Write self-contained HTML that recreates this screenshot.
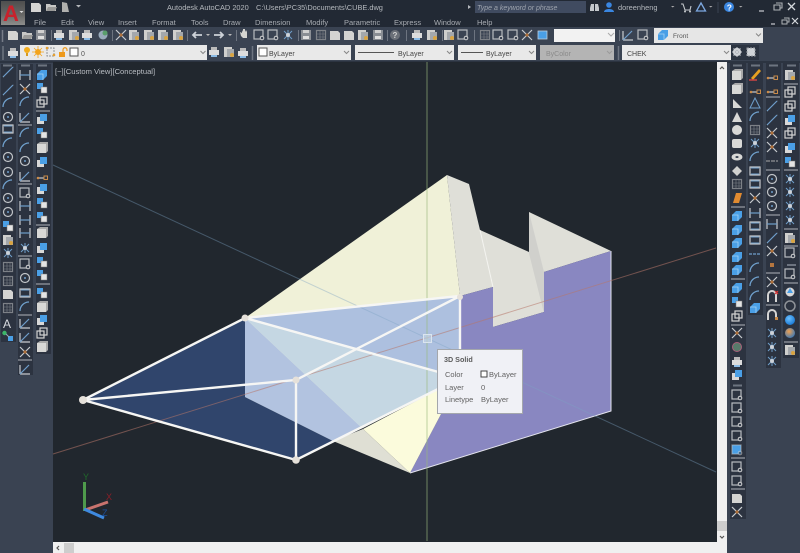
<!DOCTYPE html>
<html><head><meta charset="utf-8"><style>
html,body{margin:0;padding:0;width:800px;height:553px;overflow:hidden;background:#3a4352;font-family:"Liberation Sans",sans-serif}
svg{position:absolute;left:0;top:0;display:block}
text{font-family:"Liberation Sans",sans-serif}
</style></head><body>
<svg width="800" height="553" viewBox="0 0 800 553" xmlns="http://www.w3.org/2000/svg">
<defs>
<linearGradient id="lg" x1="0" y1="0" x2="0" y2="1"><stop offset="0" stop-color="#4e4e4e"/><stop offset=".6" stop-color="#6a6a68"/><stop offset="1" stop-color="#8e8e8c"/></linearGradient>
<radialGradient id="sb" cx=".4" cy=".35" r=".7"><stop offset="0" stop-color="#6cc0ff"/><stop offset="1" stop-color="#1676d2"/></radialGradient>
<radialGradient id="so" cx=".4" cy=".35" r=".7"><stop offset="0" stop-color="#f0a050"/><stop offset="1" stop-color="#3a78b8"/></radialGradient>
<g id="l"><path d="M-5 5L5-5" stroke="#6f9fcb" stroke-width="1.2"/><path d="M-5 5h.1M5-5h.1" stroke="#c8ccd0" stroke-width="2"/></g>
<g id="a"><path d="M-5 4A9 9 0 0 1 4-5" fill="none" stroke="#6f9fcb" stroke-width="1.3"/></g>
<g id="c"><circle r="4.5" fill="none" stroke="#c0c4c8" stroke-width="1.2"/><circle r="1" fill="#6f9fcb"/></g>
<g id="r"><rect x="-5" y="-4" width="10" height="8" fill="none" stroke="#c8ccd0" stroke-width="1.2"/><path d="M-4-3h8M-4 3h8" stroke="#6f9fcb"/></g>
<g id="b"><path d="M-5 5V-1L-1-5H5V1L1 5Z" fill="#4a9fe6"/><path d="M-5-1H1V5" fill="none" stroke="#a6d2f4" stroke-width=".8"/></g>
<g id="g"><rect x="-5" y="-4" width="9" height="9" fill="#d8d8d6"/><path d="M-5-4L-2-6H6V3L4 5V-4Z" fill="#a9a9a9"/></g>
<g id="w"><rect x="-5" y="-2" width="7" height="7" fill="none" stroke="#d4d4d4" stroke-width="1.2"/><rect x="-2" y="-5" width="7" height="7" fill="none" stroke="#d4d4d4" stroke-width="1.2"/></g>
<g id="u"><rect x="-5" y="-2" width="7" height="7" fill="#d8d8d8"/><rect x="-2" y="-5" width="7" height="7" fill="#4a9fe6"/></g>
<g id="v"><rect x="-5" y="-5" width="6" height="6" fill="#4a9fe6"/><rect x="-1" y="-1" width="6" height="6" fill="#e4e4e4" stroke="#777" stroke-width=".5"/></g>
<g id="d"><path d="M-5-5V5M5-5V5" stroke="#c8ccd0" stroke-width="1.2"/><path d="M-5 0H5" stroke="#6f9fcb" stroke-width="1.2"/></g>
<g id="t"><path d="M-5 5V-4M-5 5H5" stroke="#c8ccd0" stroke-width="1.2"/><path d="M-5 5L4-4" stroke="#6f9fcb" stroke-width="1.2"/></g>
<g id="x"><path d="M-5-5L5 5M5-5L-5 5" stroke="#c8ccd0" stroke-width="1.2"/><circle r="1.6" fill="#b5763f"/></g>
<g id="k"><path d="M-5 3H2" stroke="#c8ccd0" stroke-width="1.2"/><rect x="2" y="1" width="3.5" height="3.5" fill="none" stroke="#c98b4a"/><circle cx="-4" cy="3" r="1.3" fill="#c98b4a"/></g>
<g id="z"><rect x="-5" y="-5" width="9" height="9" fill="none" stroke="#b8bcc0" stroke-width="1.2"/><circle cx="3" cy="3" r="1.8" fill="#3a4352" stroke="#d0d0d0"/></g>
<g id="s"><path d="M-4-4L4 4M4-4L-4 4M0-5V5" stroke="#6f9fcb" stroke-width="1"/><circle r="2" fill="#cdd2d8"/></g>
<g id="p"><path d="M-5-4h8l2 2v7h-10Z" fill="#d4d4d2"/></g>
<g id="f"><path d="M-5-3h4l1 1h5v6h-10Z" fill="#c8c8c6"/><path d="M-5 4l2-4h9l-2 4Z" fill="#9a9a98"/></g>
<g id="q"><rect x="-5" y="-5" width="10" height="10" fill="#8a8e94"/><rect x="-3" y="-5" width="6" height="3" fill="#d0d0d0"/><rect x="-3" y="1" width="6" height="3" fill="#e0e0e0"/></g>
<g id="m"><rect x="-5" y="-2" width="10" height="5" fill="#dcdcdc"/><rect x="-3" y="-5" width="6" height="3" fill="#bbb"/><rect x="-3" y="3" width="6" height="2" fill="#8cbce6"/></g>
<g id="n"><rect x="-5" y="-5" width="8" height="10" fill="#cfcfcd"/><rect x="-2" y="-3" width="7" height="8" fill="#a4a8ac"/><circle cx="3" cy="3" r="2" fill="#d9a441"/></g>
<g id="h"><rect x="-4.500" y="-4.500" width="9" height="9" fill="none" stroke="#7d8187" stroke-width="1.200"/><path d="M-5-1H5M-5 2H5M-1-5V5M2-5V5" stroke="#7d8187" stroke-width=".6"/></g>
<path id="sep" d="M0 0h14" stroke="#9a9ea6" stroke-width="1.2"/>
<path id="gr" d="M0 0h9" stroke="#6d7480" stroke-width="2"/>
</defs>

<!-- chrome -->
<rect width="800" height="553" fill="#3a4352"/>
<rect width="800" height="27" fill="#222934"/>
<rect x="0" y="61" width="800" height="2" fill="#2c3441"/>

<!-- viewport -->
<rect x="53" y="62" width="664" height="480" fill="#21272e"/>

<!-- solid -->
<path d="M245 318L447 175L460 296L460 378L363 428L333 441L245 397Z" fill="#f0f1d8"/>
<path d="M447 175L469 184L480 230L529 252V212L611 251L544 272V312L493 327V287L460 296Z" fill="#dfdfd8"/>
<path d="M529 212L544 272V312L529 252Z" fill="#d0d0cc"/>
<path d="M480 230L493 287" stroke="#f4f4f0" stroke-width="1"/>
<path d="M529 252L544 312" stroke="#d0d0cc" stroke-width=".6"/>
<path d="M460 296L493 287V327L544 312V272L611 251V411L410 473L441 414L460 378Z" fill="#8987c1"/>
<path d="M611 251V411L410 473" fill="none" stroke="#e4e4ee" stroke-width="1"/>
<path d="M363 429L460 378L410 473Z" fill="#fbfbdc"/>
<path d="M333 441L363 429L410 473Z" fill="#dfdfd4"/>
<path d="M83 400L245 318V397L333 441L296 460Z" fill="#30456c"/>
<path d="M245 318L245 397L333 441L362 428Z" fill="#b2c3e0"/>
<path d="M245 318L460 378L362 428Z" fill="#c5d7e3"/>
<path d="M245 318L460 296V378Z" fill="#adc0df"/>

<!-- axes -->
<path d="M53 454L716 248" stroke="#b7766a" stroke-opacity=".55" stroke-width="1"/>
<path d="M53 165L716 472" stroke="#7da3c2" stroke-opacity=".4" stroke-width="1"/>
<path d="M427 62V541" stroke="#9ab87c" stroke-opacity=".65" stroke-width="1"/>
<rect x="423.500" y="334.500" width="8" height="8" fill="#c6d6e6" fill-opacity=".6" stroke="#dbe5ee" stroke-width="1"/>

<!-- wire -->
<g stroke="#f6f6f4" stroke-width="2.400" fill="none" stroke-linecap="round">
<path d="M83 400L245 318L460 296M83 400L296 380L460 296V378M83 400L296 460L460 378M245 318L460 378M296 380V460"/>
</g>
<g fill="#e6e1da"><circle cx="83" cy="400" r="4"/><circle cx="245" cy="318" r="3.500"/><circle cx="296" cy="380" r="3.500"/><circle cx="296" cy="460" r="3.800"/><circle cx="460" cy="297" r="3"/></g>

<!-- UCS -->
<path d="M84.500 511V482" stroke="#4f9a4c" stroke-width="3"/>
<path d="M85 510L108 502" stroke="#c8736e" stroke-width="3"/>
<path d="M84 509L104 518" stroke="#3f8ae0" stroke-width="3"/>
<text x="83" y="480" font-size="9" fill="#1f6b2a">Y</text>
<text x="106" y="500" font-size="9" fill="#8a1f28">X</text>
<text x="102" y="516" font-size="9" fill="#1c4f9c">Z</text>

<!-- tooltip -->
<rect x="437.500" y="349.500" width="85" height="64" fill="#f0f1f6" stroke="#a4a7ac"/>
<text x="444" y="362" font-size="7.200" font-weight="bold" fill="#5c5c5c">3D Solid</text>
<g font-size="7.500" fill="#626262">
<text x="445" y="377">Color</text><rect x="481" y="371" width="6" height="6" fill="#fff" stroke="#444"/><text x="489" y="377">ByLayer</text>
<text x="445" y="390">Layer</text><text x="481" y="390">0</text>
<text x="445" y="402">Linetype</text><text x="481" y="402">ByLayer</text>
</g>

<text x="55" y="74" font-size="7.600" fill="#b8bcc2">[−][Custom View][Conceptual]</text>

<!-- scrollbars -->
<rect x="717" y="62" width="10" height="481" fill="#f0f0f0"/>
<rect x="717" y="521" width="10" height="10" fill="#cdcdcd"/>
<path d="M720 69l2-2 2 2M720 536l2 2 2-2" fill="none" stroke="#555" stroke-width="1.200"/>
<rect x="53" y="542" width="674" height="11" fill="#f0f0f0"/>
<rect x="64" y="543" width="10" height="10" fill="#cdcdcd"/>
<path d="M59 546l-2 2 2 2" fill="none" stroke="#555" stroke-width="1.200"/>

<!-- title bar -->
<rect x="1" y="1" width="24" height="24" fill="url(#lg)"/>
<text x="3" y="21" font-size="22" font-weight="bold" fill="#c8222c">A</text>
<path d="M19.500 11h4l-2 2Z" fill="#ddd"/>
<use href="#p" x="36" y="7"/><use href="#f" x="51" y="7"/><path d="M62 2l5 1 2 9h-7Z" fill="#b0b0ae"/><path d="M76 5h5l-2.500 2.500Z" fill="#b5b8bc"/>
<text x="167" y="10" font-size="7.400" fill="#b4b8bd">Autodesk AutoCAD 2020</text>
<text x="256" y="10" font-size="7.400" fill="#b4b8bd">C:\Users\PC35\Documents\CUBE.dwg</text>
<path d="M468 5l3 2-3 2Z" fill="#b4b8bd"/>
<rect x="475" y="1" width="111" height="12" fill="#404b60"/>
<text x="477" y="10" font-size="7" font-style="italic" fill="#9ea4ae">Type a keyword or phrase</text>
<path d="M591 4h3v7h-4v-3ZM595 4h3l1 4v3h-4Z" fill="#c4c8cc"/>
<circle cx="609" cy="5" r="2.800" fill="#3a86e0"/><path d="M604 12c0-4 10-4 10 0Z" fill="#3a86e0"/>
<text x="618" y="10" font-size="7.400" fill="#b4b8bd">doreenheng</text>
<path d="M671 6h3.500l-1.750 1.500Z" fill="#aaa"/>
<path d="M681 4h2l2 6h5l1-4" fill="none" stroke="#c4c8cc" stroke-width="1.100"/><circle cx="685" cy="11.500" r="1" fill="#c4c8cc"/><circle cx="690" cy="11.500" r="1" fill="#c4c8cc"/>
<path d="M701 3l4.500 8h-9Z" fill="none" stroke="#7da8e0" stroke-width="1.300"/>
<path d="M709 6h3.500l-1.750 1.500Z" fill="#aaa"/>
<path d="M718 2v11" stroke="#3a4352"/>
<circle cx="729" cy="7" r="5" fill="#3a86e0"/><text x="726.700" y="10.500" font-size="8.500" font-weight="bold" fill="#fff">?</text>
<path d="M739 6h3.500l-1.750 1.500Z" fill="#aaa"/>
<path d="M759 11h5" stroke="#c8ccd0" stroke-width="1.200"/>
<path d="M776 3h6v5h-2M774 5h6v5h-6Z" fill="none" stroke="#aeb2b6" stroke-width="1.100"/>
<path d="M788 3l7 7M795 3l-7 7" stroke="#d4d8dc" stroke-width="1.300"/>

<!-- menu -->
<g font-size="7.500" fill="#a8acb2">
<text x="34" y="25">File</text><text x="61" y="25">Edit</text><text x="88" y="25">View</text><text x="118" y="25">Insert</text><text x="152" y="25">Format</text><text x="191" y="25">Tools</text><text x="223" y="25">Draw</text><text x="255" y="25">Dimension</text><text x="306" y="25">Modify</text><text x="344" y="25">Parametric</text><text x="394" y="25">Express</text><text x="434" y="25">Window</text><text x="477" y="25">Help</text>
</g>
<path d="M771 24h4" stroke="#c8ccd0" stroke-width="1.200"/>
<path d="M784 18h5v4h-1.500M782 20h5v4h-5Z" fill="none" stroke="#aeb2b6"/>
<path d="M792 18l6 6M798 18l-6 6" stroke="#d4d8dc" stroke-width="1.200"/>

<!-- toolbar row 1 -->
<g>
<path d="M2.500 30v12" stroke="#777d88" stroke-width="1.500"/>
<use href="#p" x="13" y="35"/><use href="#f" x="27" y="35"/><use href="#q" x="41" y="35"/>
<path d="M51.500 30v11M112.500 30v11M187.500 30v11M236.500 30v11M298.500 30v11M387.500 30v11M406.500 30v11M442.500 30v11M474.500 30v11" stroke="#6d7480"/>
<use href="#m" x="59" y="35"/><use href="#n" x="74" y="35"/><use href="#m" x="87" y="35"/><circle cx="103" cy="35" r="4.500" fill="#9ab"/><circle cx="105" cy="33" r="2.500" fill="#5a9e6c"/>
<use href="#x" x="121" y="35"/><use href="#n" x="134" y="35"/><use href="#n" x="149" y="35"/><use href="#n" x="163" y="35"/><use href="#n" x="178" y="35"/>
<path d="M193 35h9M196 32l-3 3 3 3" fill="none" stroke="#cdd2d8" stroke-width="1.800"/><path d="M206 34h4l-2 2Z" fill="#bbb"/>
<path d="M214 35h9M220 32l3 3-3 3" fill="none" stroke="#cdd2d8" stroke-width="1.800"/><path d="M228 34h4l-2 2Z" fill="#bbb"/>
<path d="M241 36l-1-4 2 1v-3l1 2v-3h2v3l1-2 1 2v6h-4Z" fill="#d4d4d0"/>
<use href="#z" x="259" y="35"/><use href="#z" x="273" y="35"/><use href="#s" x="288" y="35"/>
<use href="#q" x="306" y="35"/><use href="#h" x="321" y="35"/><use href="#p" x="335" y="35"/><use href="#p" x="349" y="35"/><use href="#n" x="363" y="35"/><use href="#q" x="378" y="35"/>
<circle cx="395" cy="35" r="5" fill="#6b7078"/><text x="392.500" y="38" font-size="8" font-weight="bold" fill="#d0d0d0">?</text>
<use href="#m" x="417" y="35"/><use href="#n" x="432" y="35"/><use href="#n" x="449" y="35"/><use href="#z" x="463" y="35"/>
<use href="#h" x="485" y="35"/><use href="#z" x="498" y="35"/><use href="#z" x="513" y="35"/><use href="#x" x="527" y="35"/><rect x="538" y="31" width="9" height="8" fill="#4a9fe6" stroke="#bcd" stroke-width=".8"/>
<rect x="554" y="29" width="61" height="13" fill="#f2f2f2"/><path d="M608 33l3 3 3-3" fill="none" stroke="#aaa"/>
<path d="M619.500 30v11" stroke="#6d7480"/>
<use href="#t" x="628" y="35"/><use href="#z" x="643" y="35"/>
<rect x="654" y="28" width="109" height="15" fill="#e6e6e6"/>
<use href="#b" x="663" y="35"/>
<text x="673" y="38" font-size="6.500" fill="#555">Front</text>
<path d="M756 33.500l2.500 2.500 2.500-2.500" fill="none" stroke="#888" stroke-width="1"/>
</g>

<!-- toolbar row 2 -->
<path d="M3 46v14M252.500 46v14M618.500 46v14" stroke="#6d7480" stroke-width="1.500"/>
<use href="#m" x="13" y="53"/>
<rect x="20" y="45" width="187" height="15" fill="#e9e9e9"/>
<circle cx="27" cy="50" r="3" fill="#f3ad1c"/><rect x="26" y="53" width="2" height="3" fill="#d69a20"/>
<circle cx="38" cy="52" r="3" fill="#f3a41c"/><path d="M38 46v12M32 52h12M34 48l8 8M42 48l-8 8" stroke="#f3a41c" stroke-width=".8"/>
<rect x="47" y="48" width="7" height="8" fill="none" stroke="#8e9296" stroke-dasharray="2 1"/><circle cx="54" cy="55" r="1.300" fill="#e6a030"/><circle cx="47" cy="48" r="1.300" fill="#e6a030"/>
<rect x="59" y="52" width="6" height="5" fill="#ee9a1c"/><path d="M63 52v-2c0-3 4-3 4 0v1" fill="none" stroke="#ee9a1c" stroke-width="1.200"/>
<rect x="70" y="48" width="8" height="8" fill="#fff" stroke="#555"/>
<text x="81" y="56" font-size="7" fill="#555">0</text>
<path d="M200.500 51l2.500 2.500 2.500-2.500" fill="none" stroke="#888"/>
<use href="#m" x="214" y="52"/><use href="#n" x="229" y="52"/><use href="#m" x="243" y="53"/>
<rect x="257" y="45" width="94" height="15" fill="#e9e9e9"/>
<rect x="259" y="48" width="8" height="8" fill="#fff" stroke="#555"/>
<text x="269" y="56" font-size="7" fill="#444">ByLayer</text>
<path d="M344 51l2.500 2.500 2.500-2.500" fill="none" stroke="#888"/>
<rect x="355" y="45" width="99" height="15" fill="#e9e9e9"/>
<path d="M358 52.500h36" stroke="#555"/><text x="398" y="56" font-size="7" fill="#444">ByLayer</text>
<path d="M447 51l2.500 2.500 2.500-2.500" fill="none" stroke="#888"/>
<rect x="458" y="45" width="78" height="15" fill="#e9e9e9"/>
<path d="M461 52.500h22" stroke="#555"/><text x="486" y="56" font-size="7" fill="#444">ByLayer</text>
<path d="M529 51l2.500 2.500 2.500-2.500" fill="none" stroke="#888"/>
<rect x="540" y="45" width="74" height="15" fill="#b4b4b4"/>
<text x="546" y="56" font-size="7" fill="#8a8a8a">ByColor</text>
<path d="M607 51l2.500 2.500 2.500-2.500" fill="none" stroke="#9a9a9a"/>
<rect x="622" y="45" width="109" height="15" fill="#e9e9e9"/>
<text x="627" y="56" font-size="7" fill="#444">CHEK</text>
<path d="M724 51l2.500 2.500 2.500-2.500" fill="none" stroke="#888"/>
<rect x="731" y="45" width="28" height="15" fill="#2c3441"/>
<circle cx="737" cy="52" r="3" fill="none" stroke="#cfd2d6" stroke-width="2.200"/><path d="M737 47v10M732 52h10M733.500 48.500l7 7M740.500 48.500l-7 7" stroke="#cfd2d6" stroke-width="1"/>
<rect x="747" y="48" width="8" height="8" fill="#d0d4d8" stroke="#9a9ea4" stroke-dasharray="2 1"/>

<!-- left toolbars -->
<rect x="1" y="64" width="15" height="278" fill="#2c3340"/>
<rect x="18" y="64" width="15" height="311" fill="#2c3340"/>
<rect x="36" y="64" width="15" height="290" fill="#2c3340"/>
<use href="#gr" x="3" y="65.500"/><use href="#gr" x="21" y="65.500"/><use href="#gr" x="38" y="65.500"/>
<use href="#l" x="8" y="72"/><use href="#l" x="8" y="90"/><use href="#a" x="8" y="103"/><use href="#c" x="8" y="117"/><use href="#r" x="8" y="129"/><use href="#a" x="8" y="143"/><use href="#c" x="8" y="157"/><use href="#c" x="8" y="172"/><use href="#a" x="8" y="185"/><use href="#c" x="8" y="198"/><use href="#c" x="8" y="212"/><use href="#v" x="8" y="226"/><use href="#n" x="8" y="240"/><use href="#s" x="8" y="253"/><use href="#h" x="8" y="267"/><use href="#h" x="8" y="281"/><use href="#p" x="8" y="294"/><use href="#h" x="8" y="308"/>
<text x="3" y="328" font-size="12" fill="#d8dbe0">A</text>
<circle cx="4.500" cy="333" r="2.200" fill="#3db56a"/><rect x="8" y="336" width="5" height="5" fill="#4a9fe6"/><path d="M6 334l3 3" stroke="#9ab"/>

<use href="#d" x="25" y="75"/><use href="#x" x="25" y="89"/><use href="#a" x="25" y="102"/><use href="#t" x="25" y="117"/>
<use href="#sep" x="18" y="125"/>
<use href="#a" x="25" y="133"/><use href="#a" x="25" y="148"/><use href="#c" x="25" y="161"/><use href="#t" x="25" y="176"/>
<use href="#sep" x="18" y="184"/>
<use href="#z" x="25" y="193"/><use href="#d" x="25" y="206"/><use href="#d" x="25" y="220"/><use href="#d" x="25" y="233"/><use href="#s" x="25" y="248"/>
<use href="#sep" x="18" y="256"/>
<use href="#z" x="25" y="264"/><use href="#c" x="25" y="278"/><use href="#r" x="25" y="293"/><use href="#a" x="25" y="307"/>
<use href="#sep" x="18" y="315"/>
<use href="#t" x="25" y="323"/><use href="#t" x="25" y="337"/><use href="#x" x="25" y="352"/>
<use href="#sep" x="18" y="360"/>
<use href="#t" x="25" y="369"/>

<use href="#b" x="42" y="75"/><use href="#v" x="42" y="88"/><use href="#w" x="42" y="102"/>
<use href="#sep" x="36" y="111"/>
<use href="#u" x="42" y="119"/><use href="#v" x="42" y="133"/><use href="#g" x="42" y="148"/><use href="#u" x="42" y="162"/><use href="#k" x="42" y="175"/><use href="#u" x="42" y="189"/><use href="#v" x="42" y="203"/><use href="#v" x="42" y="217"/>
<use href="#sep" x="36" y="225"/>
<use href="#g" x="42" y="233"/><use href="#u" x="42" y="248"/><use href="#v" x="42" y="262"/><use href="#v" x="42" y="275"/>
<use href="#sep" x="36" y="284"/>
<use href="#v" x="42" y="293"/><use href="#g" x="42" y="307"/><use href="#u" x="42" y="320"/><use href="#w" x="42" y="333"/><use href="#g" x="42" y="347"/>

<!-- right toolbars -->
<rect x="730" y="63" width="16" height="322" fill="#2c3340"/>
<rect x="730" y="383" width="16" height="136" fill="#2c3340"/>
<rect x="748" y="63" width="15" height="252" fill="#2c3340"/>
<rect x="766" y="63" width="15" height="305" fill="#2c3340"/>
<rect x="783" y="63" width="16" height="295" fill="#2c3340"/>
<use href="#gr" x="733" y="65.500"/><use href="#gr" x="751" y="65.500"/><use href="#gr" x="769" y="65.500"/><use href="#gr" x="787" y="65.500"/><use href="#gr" x="733" y="385.500"/>
<use href="#g" x="737" y="75"/><use href="#g" x="737" y="89"/><path d="M733 108V99L742 108Z" fill="#d8d8d6"/><path d="M737 112L732 122H742Z" fill="#d8d8d6"/><circle cx="737" cy="130" r="5" fill="#d8d8d6"/><rect x="732" y="139" width="10" height="9" rx="2" fill="#d8d8d6"/><ellipse cx="737" cy="157" rx="5.500" ry="3.500" fill="#d8d8d6"/><ellipse cx="737" cy="157" rx="1.600" ry="1" fill="#3a4352"/><path d="M737 166l5 5-5 5-5-5Z" fill="#d0d0ce"/><use href="#h" x="737" y="184"/><path d="M733 203l3-10h6l-3 10Z" fill="#e08a30"/>
<use href="#sep" x="731" y="207"/>
<use href="#b" x="737" y="216"/><use href="#b" x="737" y="230"/><use href="#b" x="737" y="243"/><use href="#b" x="737" y="257"/><use href="#b" x="737" y="270"/>
<use href="#sep" x="731" y="279"/>
<use href="#b" x="737" y="288"/><use href="#v" x="737" y="302"/><use href="#w" x="737" y="316"/>
<use href="#sep" x="731" y="325"/>
<use href="#x" x="737" y="333"/><circle cx="737" cy="347" r="4.500" fill="#577b6a" stroke="#a8617a"/><use href="#m" x="737" y="362"/><use href="#u" x="737" y="375"/>
<use href="#z" x="737" y="395"/><use href="#z" x="737" y="408"/><use href="#z" x="737" y="422"/><use href="#z" x="737" y="436"/><path d="M732 445h9v9h-9Z" fill="#4a9fe6"/><use href="#z" x="737" y="450" opacity=".6"/>
<use href="#sep" x="731" y="458"/>
<use href="#z" x="737" y="467"/><use href="#z" x="737" y="481"/>
<use href="#sep" x="731" y="489"/>
<use href="#p" x="737" y="498"/><use href="#x" x="737" y="512"/>

<path d="M751 78l8-9 2 2-8 9Z" fill="#e6a020"/><path d="M749 80h8" stroke="#c44" stroke-width="1.500"/>
<use href="#k" x="755" y="89"/><path d="M755 98l5 10h-10Z" fill="none" stroke="#6f9fcb"/><use href="#a" x="755" y="117"/><use href="#h" x="755" y="130"/><use href="#s" x="755" y="143"/><use href="#a" x="755" y="157"/><use href="#r" x="755" y="171"/><use href="#r" x="755" y="184"/><use href="#x" x="755" y="198"/><use href="#d" x="755" y="213"/><use href="#r" x="755" y="226"/><use href="#r" x="755" y="240"/><path d="M749 254h12" stroke="#6f9fcb" stroke-width="1.200" stroke-dasharray="3 1"/><use href="#a" x="755" y="268"/><use href="#a" x="755" y="282"/><use href="#a" x="755" y="296"/><use href="#b" x="755" y="308"/>

<use href="#k" x="772" y="75"/><use href="#k" x="772" y="89"/>
<use href="#sep" x="766" y="97"/>
<use href="#l" x="772" y="106"/><use href="#l" x="772" y="120"/><use href="#x" x="772" y="133"/><use href="#x" x="772" y="147"/><path d="M766 161h12" stroke="#aaa" stroke-dasharray="4 1"/>
<use href="#sep" x="766" y="170"/>
<use href="#c" x="772" y="179"/><use href="#c" x="772" y="192"/><use href="#c" x="772" y="206"/>
<use href="#sep" x="766" y="215"/>
<use href="#d" x="772" y="224"/><use href="#l" x="772" y="238"/><use href="#x" x="772" y="251"/><rect x="770" y="263" width="4" height="4" fill="#b5763f"/>
<use href="#sep" x="766" y="273"/>
<use href="#x" x="772" y="282"/>
<path d="M768 302v-7a4 4 0 0 1 8 0v7" fill="none" stroke="#d4d4d4" stroke-width="2"/><path d="M775 291l3 3m0-3l-3 3" stroke="#d33" stroke-width="1.200"/>
<use href="#sep" x="766" y="305"/>
<path d="M768 320v-6a4 4 0 0 1 8 0v6" fill="none" stroke="#d4d4d4" stroke-width="2"/><rect x="775" y="317" width="3" height="3" fill="#c98b4a"/>
<use href="#s" x="772" y="333"/><use href="#s" x="772" y="347"/><use href="#s" x="772" y="361"/>

<use href="#n" x="790" y="75"/>
<use href="#sep" x="784" y="84"/>
<use href="#w" x="790" y="92"/><use href="#w" x="790" y="106"/><use href="#u" x="790" y="120"/><use href="#w" x="790" y="133"/><use href="#u" x="790" y="148"/><use href="#v" x="790" y="162"/>
<use href="#sep" x="784" y="170"/>
<use href="#s" x="790" y="179"/><use href="#s" x="790" y="192"/><use href="#s" x="790" y="206"/><use href="#s" x="790" y="220"/>
<use href="#sep" x="784" y="229"/>
<use href="#n" x="790" y="238"/>
<use href="#sep" x="784" y="246"/>
<use href="#z" x="790" y="253"/>
<use href="#gr" x="787" y="265"/>
<use href="#z" x="790" y="274"/>
<use href="#sep" x="784" y="283"/>
<circle cx="790" cy="292" r="4.500" fill="#d8d8d8"/><path d="M790 288l3 5h-6Z" fill="#4a9fe6"/>
<circle cx="790" cy="306" r="5" fill="none" stroke="#8f9398" stroke-width="1.500"/>
<circle cx="790" cy="320" r="5" fill="url(#sb)"/>
<circle cx="790" cy="333" r="5" fill="url(#so)"/>
<use href="#sep" x="784" y="342"/>
<use href="#n" x="790" y="350"/>
</svg>
</body></html>
